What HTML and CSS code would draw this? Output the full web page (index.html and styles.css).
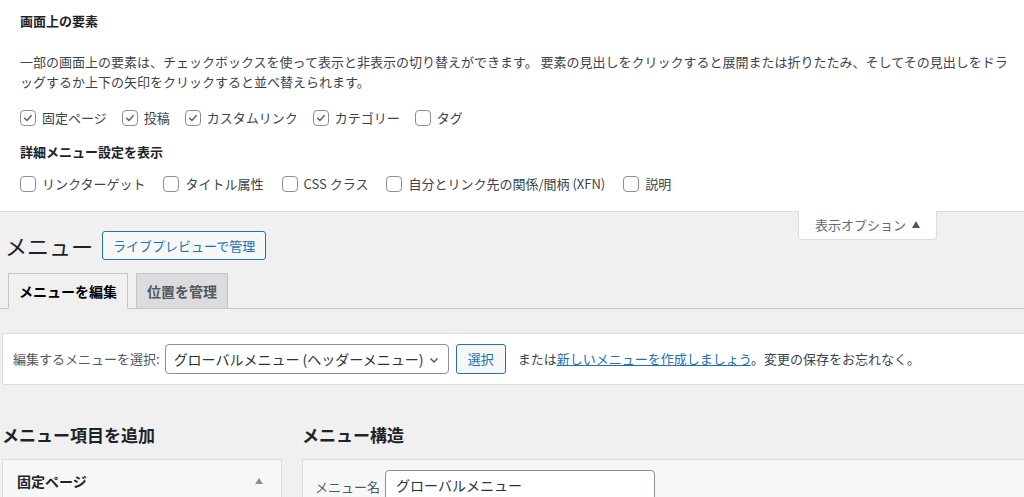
FILE: index.html
```html
<!DOCTYPE html>
<html lang="ja">
<head>
  <meta charset="UTF-8" />
  <meta name="viewport" content="width=device-width, initial-scale=1" />
  <title>メニュー</title>
  <link rel="stylesheet" href="styles.css">
</head>
<body>
  <div class="screen-options">
    <h5 class="opt-title">画面上の要素</h5>
    <p class="opt-desc">一部の画面上の要素は、チェックボックスを使って表示と非表示の切り替えができます。 要素の見出しをクリックすると展開または折りたたみ、そしてその見出しをドラッグするか上下の矢印をクリックすると並べ替えられます。</p>
    <div class="check-row">
      <label class="check"><span class="cb checked"><svg viewBox="0 0 16 16"><path d="M4.2 8.3l2.6 2.6 4.8-5.6"/></svg></span>固定ページ</label>
      <label class="check"><span class="cb checked"><svg viewBox="0 0 16 16"><path d="M4.2 8.3l2.6 2.6 4.8-5.6"/></svg></span>投稿</label>
      <label class="check"><span class="cb checked"><svg viewBox="0 0 16 16"><path d="M4.2 8.3l2.6 2.6 4.8-5.6"/></svg></span>カスタムリンク</label>
      <label class="check"><span class="cb checked"><svg viewBox="0 0 16 16"><path d="M4.2 8.3l2.6 2.6 4.8-5.6"/></svg></span>カテゴリー</label>
      <label class="check"><span class="cb"></span>タグ</label>
    </div>
    <h5 class="opt-title sub">詳細メニュー設定を表示</h5>
    <div class="check-row wide">
      <label class="check"><span class="cb"></span>リンクターゲット</label>
      <label class="check"><span class="cb"></span>タイトル属性</label>
      <label class="check"><span class="cb"></span>CSS クラス</label>
      <label class="check"><span class="cb"></span>自分とリンク先の関係/間柄 (XFN)</label>
      <label class="check"><span class="cb"></span>説明</label>
    </div>
  </div>

  <div class="wrap">
    <button class="screen-tab" type="button">表示オプション <span class="tri"></span></button>

    <div class="page-head">
      <h1>メニュー</h1>
      <a class="btn-outline" href="#">ライブプレビューで管理</a>
    </div>

    <nav class="tabs">
      <a class="tab active" href="#">メニューを編集</a>
      <a class="tab" href="#">位置を管理</a>
    </nav>

    <div class="manage-menus">
      <span class="select-label">編集するメニューを選択:</span>
      <div class="select">グローバルメニュー (ヘッダーメニュー)
        <svg class="chev" viewBox="0 0 12 12"><path d="M2.5 4.5l3.5 3.5 3.5-3.5"/></svg>
      </div>
      <a class="btn-outline small" href="#">選択</a>
      <span class="or-text">または<a class="link" href="#">新しいメニューを作成しましょう</a>。変更の保存をお忘れなく。</span>
    </div>

    <div class="columns">
      <div class="col-left">
        <h2>メニュー項目を追加</h2>
        <div class="box acc">
          <h3>固定ページ</h3>
          <span class="tri gray"></span>
        </div>
      </div>
      <div class="col-right">
        <h2>メニュー構造</h2>
        <div class="box name-box">
          <span class="name-label">メニュー名</span>
          <div class="text-input">グローバルメニュー</div>
        </div>
      </div>
    </div>
  </div>
</body>
</html>
```

FILE: styles.css
```css
/* Reset */
* {
  box-sizing: border-box;
}
html, body {
  height: 100%;
}
body {
  margin: 0;
  font-family: "Noto Sans CJK JP", "Noto Sans", sans-serif;
  font-size: 13px;
  line-height: 20px;
  color: #3c434a;
  background: #f0f0f1;
  overflow: hidden;
}
a {
  text-decoration: none;
}

/* Screen options panel */
.screen-options {
  background: #fff;
  border-bottom: 1px solid #dcdcde;
  padding: 11px 8px 17px 20px;
}
.opt-title {
  margin: 0;
  font-size: 13px;
  font-weight: 700;
  color: #1d2327;
  line-height: 20px;
}
.opt-title.sub {
  margin-top: 14px;
}
.opt-desc {
  margin: 21px 0 16px;
  color: #3c434a;
}
.check-row {
  display: flex;
  align-items: center;
  gap: 15px;
}
.check-row.wide {
  margin-top: 12px;
  gap: 18px;
}
.check {
  display: flex;
  align-items: center;
  gap: 6px;
  color: #3c434a;
}
.cb {
  width: 16px;
  height: 16px;
  border: 1px solid #8c8f94;
  border-radius: 4px;
  background: #fff;
  display: inline-flex;
}
.cb svg {
  width: 14px;
  height: 14px;
  fill: none;
  stroke: #50698a;
  stroke-width: 1.8;
  stroke-linecap: round;
  stroke-linejoin: round;
}

/* Main wrap */
.wrap {
  position: relative;
  padding: 19px 0 0 2px;
}
.screen-tab {
  position: absolute;
  top: -1px;
  right: 87px;
  width: 139px;
  height: 29px;
  background: #fff;
  border: 1px solid #dcdcde;
  border-top: none;
  border-radius: 0 0 4px 4px;
  font-family: inherit;
  font-size: 13px;
  color: #646970;
  display: flex;
  align-items: center;
  justify-content: center;
  gap: 6px;
  padding: 0 0 2px;
}
.tri {
  width: 0;
  height: 0;
  border-left: 4px solid transparent;
  border-right: 4px solid transparent;
  border-bottom: 7px solid #50575e;
}
.tri.gray {
  border-bottom-color: #8c8f94;
  border-bottom-width: 6px;
}

.page-head {
  display: flex;
  align-items: center;
  gap: 9px;
}
h1 {
  margin: 0;
  font-size: 22px;
  font-weight: 400;
  line-height: 29px;
  color: #1d2327;
  padding-left: 3px;
}
.btn-outline {
  display: inline-flex;
  align-items: center;
  height: 29px;
  padding: 0 10px;
  border: 1px solid #2271b1;
  border-radius: 3px;
  background: #f6f7f7;
  color: #2271b1;
  font-size: 13px;
}

/* Tabs */
.tabs {
  display: flex;
  gap: 8px;
  margin: 13px 0 0 -2px;
  padding-left: 8px;
  border-bottom: 1px solid #c3c4c7;
  height: 36px;
}
.tab {
  display: flex;
  align-items: center;
  height: 36px;
  padding: 0 10px;
  border: 1px solid #c3c4c7;
  background: #dcdcde;
  color: #50575e;
  font-size: 14px;
  font-weight: 700;
}
.tab.active {
  background: #f0f0f1;
  color: #000;
  border-bottom-color: #f0f0f1;
}

/* Manage menus */
.manage-menus {
  display: flex;
  align-items: center;
  margin-top: 24px;
  margin-right: -20px;
  height: 52px;
  padding: 0 10px;
  background: #fff;
  border: 1px solid #dcdcde;
}
.select-label {
  color: #50575e;
  margin-right: 5px;
}
.select {
  position: relative;
  width: 284px;
  height: 30px;
  padding: 0 8px;
  display: flex;
  align-items: center;
  border: 1px solid #8c8f94;
  border-radius: 4px;
  font-size: 14px;
  color: #2c3338;
}
.chev {
  position: absolute;
  right: 8px;
  top: 9px;
  width: 12px;
  height: 12px;
  fill: none;
  stroke: #50575e;
  stroke-width: 1.5;
}
.btn-outline.small {
  height: 30px;
  margin-left: 7px;
  padding: 0 11px;
}
.or-text {
  margin-left: 12px;
}
.link {
  color: #2271b1;
  text-decoration: underline;
}

/* Columns */
.columns {
  display: flex;
  gap: 20px;
  margin-top: 38px;
}
.col-left {
  width: 280px;
  flex-shrink: 0;
}
.col-right {
  flex: 1;
  margin-right: -20px;
}
h2 {
  margin: 0 0 12px;
  font-size: 17px;
  line-height: 24px;
  font-weight: 700;
  color: #1d2327;
}
.box {
  background: #f6f7f7;
  border: 1px solid #dcdcde;
  height: 60px;
}
.acc {
  display: flex;
  justify-content: space-between;
  padding: 10px 18px 0 14px;
  align-items: flex-start;
}
.acc h3 {
  margin: 0;
  font-size: 14px;
  font-weight: 700;
  color: #1d2327;
  line-height: 22px;
}
.acc .tri {
  margin-top: 8px;
}
.name-box {
  display: flex;
  align-items: flex-start;
  padding: 10px 12px 0;
  gap: 5px;
}
.name-label {
  color: #50575e;
  margin-top: 7px;
}
.text-input {
  width: 270px;
  height: 34px;
  background: #fff;
  border: 1px solid #8c8f94;
  border-radius: 4px;
  padding: 4px 10px;
  font-size: 14px;
  color: #2c3338;
}
```
